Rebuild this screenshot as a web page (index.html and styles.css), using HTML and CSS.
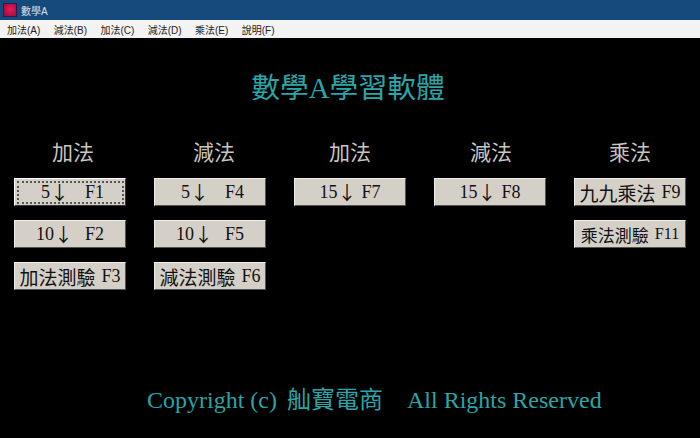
FILE: index.html
```html
<!DOCTYPE html>
<html lang="zh-Hant">
<head>
  <meta charset="UTF-8" />
  <title>數學A</title>
  <link rel="stylesheet" href="styles.css">
</head>
<body>
  <div class="titlebar">
    <svg class="app-icon" width="14" height="14" viewBox="0 0 14 14">
      <defs>
        <radialGradient id="gem" cx="0.55" cy="0.45" r="0.6">
          <stop offset="0" stop-color="#f01858"/>
          <stop offset="1" stop-color="#a01040"/>
        </radialGradient>
      </defs>
      <rect x="0.5" y="0.5" width="13" height="13" fill="url(#gem)" stroke="#2a1a50"/>
    </svg>
    <span>數學A</span>
  </div>

  <div class="menubar">
    <span>加法(A)</span>
    <span>減法(B)</span>
    <span>加法(C)</span>
    <span>減法(D)</span>
    <span>乘法(E)</span>
    <span>說明(F)</span>
  </div>

  <div class="main">
    <h1>數學A學習軟體</h1>

    <div class="columns">
      <div class="column">
        <h2 class="pad-6">加法</h2>
        <button class="focused"><span class="focus-ring one-digit"><span class="num">5</span><span class="arrow">↓</span><span class="key">F1</span></span></button>
        <button><span class="num">10</span><span class="arrow">↓</span><span class="key">F2</span></button>
        <button><span class="label">加法測驗</span>F3</button>
      </div>
      <div class="column">
        <h2 class="pad-8">減法</h2>
        <button class="one-digit"><span class="num">5</span><span class="arrow">↓</span><span class="key">F4</span></button>
        <button><span class="num">10</span><span class="arrow">↓</span><span class="key">F5</span></button>
        <button><span class="label">減法測驗</span>F6</button>
      </div>
      <div class="column">
        <h2>加法</h2>
        <button><span class="num">15</span><span class="arrow">↓</span><span class="key near">F7</span></button>
      </div>
      <div class="column">
        <h2 class="pad-2">減法</h2>
        <button><span class="num">15</span><span class="arrow">↓</span><span class="key near">F8</span></button>
      </div>
      <div class="column">
        <h2>乘法</h2>
        <button><span class="label">九九乘法</span>F9</button>
        <button class="small"><span class="label">乘法測驗</span>F11</button>
      </div>
    </div>

    <p class="copyright">Copyright (c) <span class="brand">舢寶電商</span>    All Rights Reserved</p>
  </div>
</body>
</html>
```

FILE: styles.css
```css
* { box-sizing: border-box; }

body {
  margin: 0;
  height: 438px;
  overflow: hidden;
  display: flex;
  flex-direction: column;
  background: #000;
  font-family: "Liberation Serif", "Noto Sans CJK TC", serif;
}

.titlebar {
  height: 20px;
  padding-left: 3px;
  display: flex;
  align-items: center;
  gap: 4px;
  background: #174a7c;
  color: #d8e0e8;
  font-family: "Liberation Sans", "Noto Sans CJK TC", sans-serif;
  font-size: 10px;
}

.menubar {
  height: 18px;
  padding-left: 7px;
  display: flex;
  align-items: center;
  gap: 13.4px;
  background: #f3f3f3;
  color: #222;
  font-family: "Liberation Sans", "Noto Sans CJK TC", sans-serif;
  font-size: 10px;
}

.main {
  flex: 1;
  display: flex;
  flex-direction: column;
  background: #000;
}

h1 {
  margin: 31px 0 0;
  height: 38px;
  line-height: 38px;
  text-align: center;
  font-size: 28.8px;
  font-weight: normal;
  color: #2aa5a8;
  padding-right: 4px;
}

.columns {
  margin-top: 35px;
  padding: 0 14px;
  display: grid;
  grid-template-columns: repeat(5, 112px);
  column-gap: 28px;
}

.column {
  display: flex;
  flex-direction: column;
  gap: 14px;
}

h2 {
  margin: 0;
  height: 22px;
  line-height: 22px;
  text-align: center;
  font-size: 21px;
  font-weight: normal;
  color: #c9c6c0;
}

h2.pad-2 { padding-left: 2px; }
h2.pad-6 { padding-left: 6px; }
h2.pad-8 { padding-left: 8px; }

button {
  width: 112px;
  height: 28px;
  padding: 0;
  display: flex;
  align-items: center;
  justify-content: center;
  background: #d4d0c8;
  border: 1px solid;
  border-color: #f0eee8 #55534f #55534f #f0eee8;
  color: #111;
  font-family: inherit;
  font-size: 18px;
  white-space: nowrap;
}

.label {
  margin-right: 6px;
  font-size: 19px;
}

button.small { font-size: 16px; }
button.small .label { font-size: 17px; }

button.focused {
  border-color: #fff #333 #333 #fff;
}

.focus-ring {
  width: 107px;
  height: 23px;
  display: flex;
  align-items: center;
  justify-content: center;
  border: 2px dotted #555;
}

/* the CJK font has the long thin arrow, with wide side bearings */
.arrow {
  margin: 0 -3px 0 0;
  font-family: "Noto Sans CJK TC", sans-serif;
  font-size: 19px;
  line-height: 22px;
}

.key { margin-left: 15px; }
.key.near { margin-left: 8px; }

.one-digit { padding-left: 5px; }
.one-digit .key { margin-left: 19px; }

.copyright {
  margin: 94px 0 0;
  padding-left: 147px;
  height: 32px;
  line-height: 32px;
  font-size: 24px;
  color: #2aa5a8;
  white-space: pre;
}

.brand { margin-left: 4px; }
```
